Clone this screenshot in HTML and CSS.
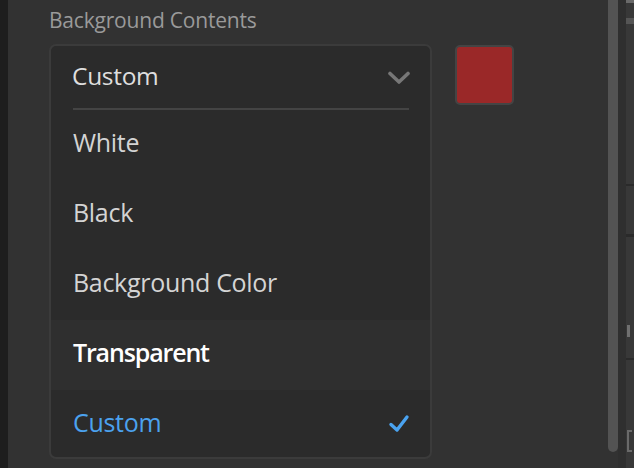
FILE: index.html
```html
<!DOCTYPE html>
<html>
<head>
<meta charset="utf-8">
<link rel="stylesheet" href="styles.css">
</head>
<body>
<div class="app">
  <div class="edge"></div>
  <main class="panel">
    <div class="label">Background Contents</div>
    <div class="row">
      <div class="dropdown">
        <div class="head">
          <span class="head-text">Custom</span>
          <svg class="chev" width="22" height="14" viewBox="0 0 22 14"><polyline points="2,2.5 11,11 20,2.5" fill="none" stroke="#777" stroke-width="3.6" stroke-linecap="round" stroke-linejoin="round"/></svg>
        </div>
        <div class="sep"></div>
        <ul class="list">
          <li class="item">White</li>
          <li class="item">Black</li>
          <li class="item">Background Color</li>
          <li class="item hover">Transparent</li>
          <li class="item selected">Custom
            <svg class="check" width="22" height="20" viewBox="0 0 22 20"><polyline points="3,10.5 9,16 19,3" fill="none" stroke="#4aa3f0" stroke-width="3.4" stroke-linecap="round" stroke-linejoin="round"/></svg>
          </li>
        </ul>
      </div>
      <div class="swatch"></div>
    </div>
  </main>
  <div class="scroll"><div class="thumb"></div></div>
  <div class="gap"></div>
  <div class="side">
    <div class="mk m1"></div>
    <div class="mk m2"></div>
    <div class="mk m3"></div>
    <div class="mk m4"></div>
    <div class="mk m5"></div>
    <div class="mk m6"></div>
    <div class="mk m7"></div>
  </div>
</div>
</body>
</html>
```

FILE: styles.css
```css
html, body {
  margin: 0;
  padding: 0;
  background: #323232;
  height: 100%;
  overflow: hidden;
}
.app {
  display: flex;
  width: 634px;
  height: 468px;
  font-family: "Open Sans", "Noto Sans", sans-serif;
}
.edge {
  width: 8px;
  background: #1e1e1e;
  flex: none;
}
.panel {
  flex: 1;
  padding: 7px 0 0 41px;
  box-sizing: border-box;
}
.label {
  color: #9a9a9a;
  font-size: 21px;
  line-height: 27px;
  letter-spacing: -0.2px;
}
.row {
  display: flex;
  align-items: flex-start;
  margin-top: 10px;
  gap: 23px;
}
.dropdown {
  width: 383px;
  height: 415px;
  box-sizing: border-box;
  border: 2px solid #3b3b3b;
  border-radius: 7px;
  background: #2b2b2b;
  overflow: hidden;
}
.head {
  height: 62px;
  box-sizing: border-box;
  padding: 0 20px 4px 21px;
  display: flex;
  align-items: center;
  justify-content: space-between;
}
.head-text {
  color: #dedede;
  font-size: 24.5px;
  letter-spacing: -0.3px;
}
.chev {
  display: block;
  margin-top: 5px;
}
.sep {
  height: 2px;
  background: #444;
  margin: 0 21px 0 22px;
}
.list {
  list-style: none;
  margin: 0;
  padding: 0;
}
.item {
  height: 70px;
  box-sizing: border-box;
  padding: 0 20px 6px 22px;
  display: flex;
  align-items: center;
  justify-content: space-between;
  color: #d4d4d4;
  font-size: 25px;
  letter-spacing: -0.3px;
}
.item.hover {
  background: #2f2f2f;
  color: #ffffff;
  font-weight: 600;
  letter-spacing: -1.15px;
}
.item.selected {
  color: #4ba2ef;
}
.check {
  display: block;
  margin-top: 4px;
}
.swatch {
  width: 59px;
  height: 60px;
  box-sizing: border-box;
  margin-top: 1px;
  border: 2px solid #444;
  border-radius: 5px;
  background: #9a2828;
}
.scroll {
  width: 10px;
  flex: none;
}
.thumb {
  height: 452px;
  background: #535353;
  border-radius: 0 0 5px 5px;
}
.gap {
  width: 8px;
  flex: none;
  background: #2f2f2f;
}
.side {
  width: 8px;
  flex: none;
  background: #383838;
  position: relative;
}
.mk {
  position: absolute;
  left: 0;
  right: 0;
}
.m1 { top: 0; height: 3px; background: #6a6a6a; }
.m2 { top: 18px; height: 6px; background: #555; }
.m3 { top: 184px; height: 2px; background: #2a2a2a; }
.m4 { top: 234px; height: 3px; background: #2a2a2a; }
.m5 { top: 325px; height: 12px; left: 1px; width: 3px; background: #707070; }
.m6 { top: 358px; height: 2px; background: #2a2a2a; }
.m7 { top: 430px; height: 22px; left: 1px; width: 5px; border: 2px solid #6a6a6a; border-right: none; box-sizing: border-box; }
```
